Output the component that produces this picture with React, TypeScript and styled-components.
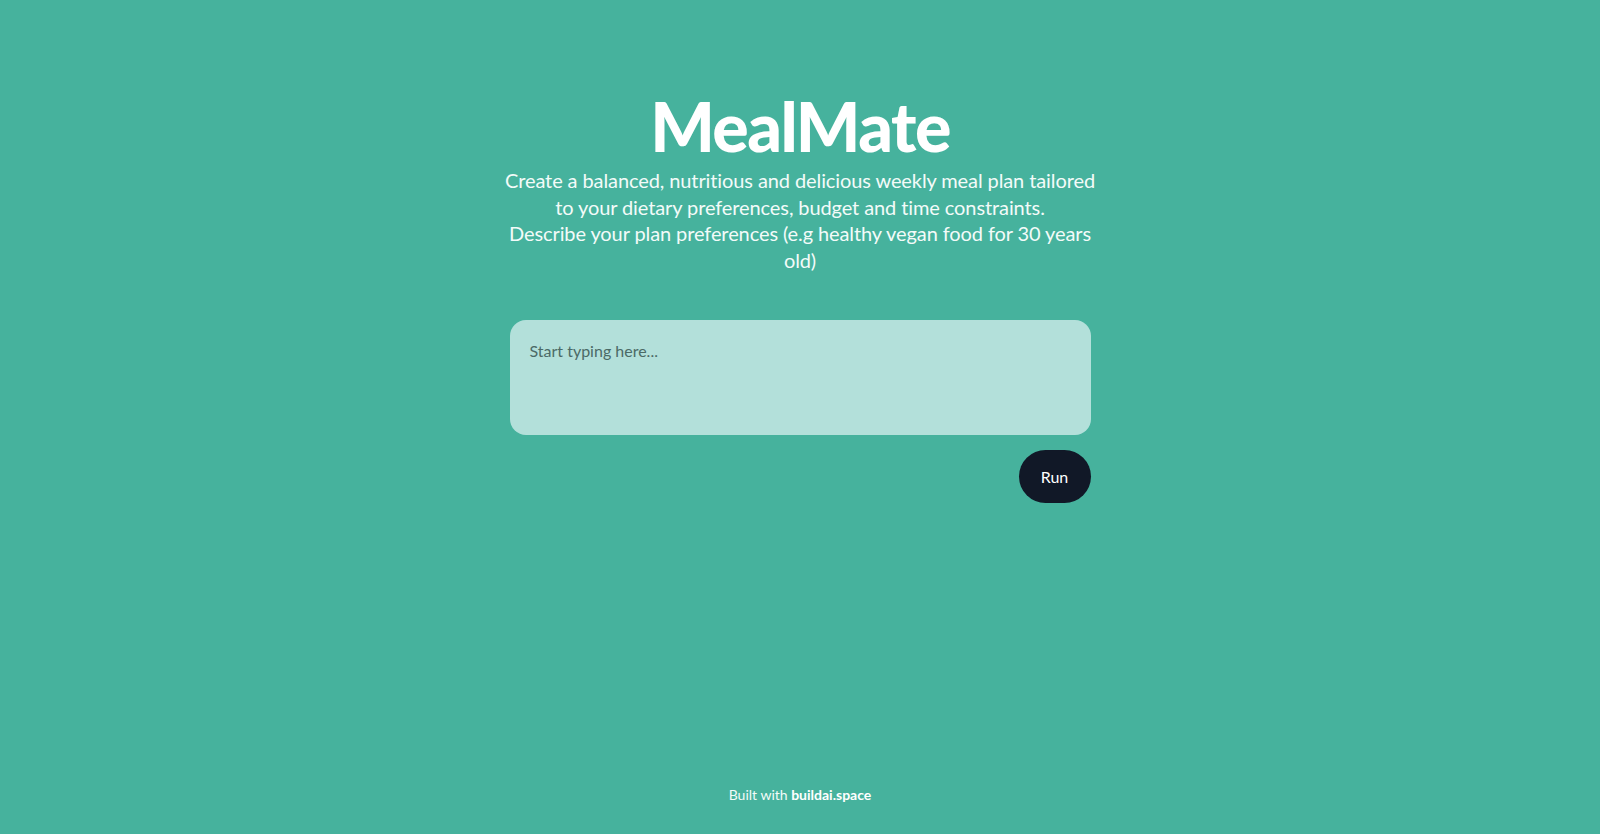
import React from "react";
import styled, { createGlobalStyle } from "styled-components";

const Global = createGlobalStyle`
  html, body { margin: 0; padding: 0; }
  body {
    background: #46b29d;
    font-family: "Lato", "Noto Sans", sans-serif;
    color: #ffffff;
  }
  * { box-sizing: border-box; }
`;

const Page = styled.div`
  min-height: 834px;
  display: flex;
  flex-direction: column;
  align-items: center;
`;

const Main = styled.main`
  flex: 1;
  width: 600px;
  display: flex;
  flex-direction: column;
  align-items: center;
  padding-top: 90px;
`;

const Title = styled.h1`
  margin: 0;
  font-size: 68px;
  line-height: 72px;
  font-weight: 900;
  letter-spacing: -1.5px;
  color: #ffffff;
`;

const Subtitle = styled.p`
  margin: 5px 0 0;
  font-size: 20px;
  line-height: 26.5px;
  letter-spacing: -0.1px;
  text-align: center;
  color: #f3fbf9;
`;

const Form = styled.div`
  width: 581px;
  margin-top: 47px;
  display: flex;
  flex-direction: column;
  align-items: flex-end;
  gap: 15px;
`;

const Input = styled.textarea`
  width: 100%;
  height: 115px;
  resize: none;
  border: none;
  outline: none;
  border-radius: 16px;
  background: #b3e0da;
  padding: 21px 20px;
  font-family: "Lato", "Noto Sans", sans-serif;
  font-size: 16px;
  color: #1f2937;
  &::placeholder { color: #4b6a66; }
`;

const RunButton = styled.button`
  width: 72px;
  height: 53px;
  border: none;
  border-radius: 27px;
  background: #111827;
  color: #ffffff;
  font-family: "Lato", "Noto Sans", sans-serif;
  font-size: 16px;
  cursor: pointer;
`;

const Footer = styled.footer`
  padding-bottom: 31px;
  font-size: 14px;
  color: #f3fbf9;
  b { font-weight: 700; color: #ffffff; }
`;

export default function App() {
  return (
    <>
      <Global />
      <Page>
        <Main>
          <Title>MealMate</Title>
          <Subtitle>
            Create a balanced, nutritious and delicious weekly meal plan tailored to your dietary preferences, budget and time constraints.
            <br />
            Describe your plan preferences (e.g healthy vegan food for 30 years old)
          </Subtitle>
          <Form>
            <Input placeholder="Start typing here..." />
            <RunButton>Run</RunButton>
          </Form>
        </Main>
        <Footer>
          Built with <b>buildai.space</b>
        </Footer>
      </Page>
    </>
  );
}
